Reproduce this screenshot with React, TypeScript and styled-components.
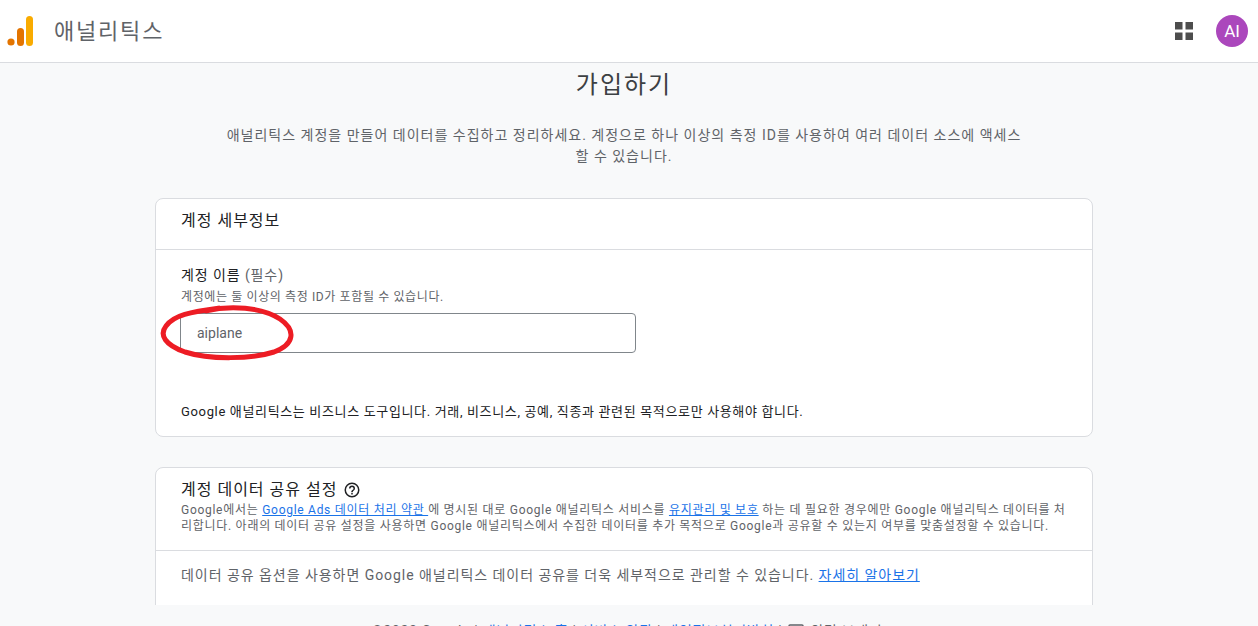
import styled, { createGlobalStyle } from "styled-components";

const GlobalStyle = createGlobalStyle`
  html, body {
    margin: 0;
    height: 100%;
    overflow: hidden;
    background: #f8f9fa;
  }
  body {
    font-family: Roboto, "Noto Sans CJK KR", sans-serif;
    color: #3c4043;
  }
`;

const Page = styled.div`
  display: flex;
  flex-direction: column;
  height: 626px;
  overflow: hidden;
`;

const Header = styled.header`
  flex: none;
  display: flex;
  align-items: center;
  height: 62px;
  background: #fff;
  border-bottom: 1px solid #dadce0;
  padding: 0 10px 0 7px;
`;

const Brand = styled.div`
  font-size: 22px;
  color: #5f6368;
  margin-left: 20px;
  letter-spacing: 1.8px;
  flex: 1;
  padding-bottom: 4px;
`;

const AppsIcon = styled.svg`
  width: 18px;
  height: 18px;
  margin-right: 23px;
  fill: #4d4d4d;
`;

const Avatar = styled.div`
  width: 32px;
  height: 32px;
  border-radius: 50%;
  background: #ab47bc;
  color: #fff;
  font-size: 17px;
  display: flex;
  align-items: center;
  justify-content: center;
`;

const Scroller = styled.main`
  flex: none;
  height: 542px;
  box-sizing: border-box;
  padding-right: 10px;
  overflow: hidden;
  position: relative;
`;

const Title = styled.h1`
  margin: 6px 0 0;
  font-size: 24px;
  line-height: 32px;
  font-weight: 400;
  letter-spacing: 2px;
  color: #3c4043;
  text-align: center;
`;

const Intro = styled.p`
  width: 810px;
  margin: 24px auto 31px;
  font-size: 14px;
  line-height: 21px;
  letter-spacing: 1px;
  color: #5f6368;
  text-align: center;
`;

const Card = styled.section`
  width: 938px;
  box-sizing: border-box;
  margin: 0 auto 30px;
  background: #fff;
  border: 1px solid #dadce0;
  border-radius: 8px;
`;

const CardHead = styled.div<{ $height: number }>`
  height: ${(p) => p.$height}px;
  box-sizing: border-box;
  padding: 12px 24px 0 25px;
  border-bottom: 1px solid #dadce0;
`;

const CardTitle = styled.h2`
  margin: 0;
  display: flex;
  align-items: center;
  gap: 6px;
  font-size: 16px;
  line-height: 20px;
  font-weight: 400;
  letter-spacing: 1px;
  color: #202124;
`;

const CardBody = styled.div`
  padding: 15px 24px 0 25px;
`;

const FieldLabel = styled.div`
  font-size: 14px;
  line-height: 20px;
  letter-spacing: 0.9px;
  color: #202124;
`;

const Required = styled.span`
  color: #5f6368;
`;

const Hint = styled.div`
  margin-top: 4px;
  font-size: 12px;
  line-height: 16px;
  letter-spacing: 0.62px;
  color: #5f6368;
`;

const NameInput = styled.div`
  box-sizing: border-box;
  width: 456px;
  height: 40px;
  margin: 8px 0 0 -1px;
  padding-left: 16px;
  display: flex;
  align-items: center;
  border: 1px solid #80868b;
  border-radius: 4px;
  font-size: 14px;
  color: #5f6368;
`;

const Notice = styled.p`
  margin: 50px 0 0;
  padding-bottom: 15px;
  font-size: 13px;
  line-height: 18px;
  letter-spacing: 0.65px;
  color: #202124;
`;

const ShareText = styled.p`
  margin: 2px 0 0;
  font-size: 12px;
  line-height: 16px;
  letter-spacing: 0.72px;
  color: #5f6368;
`;

const Link = styled.a`
  color: #1a73e8;
  text-decoration: underline;
`;

const ShareOptions = styled.p`
  margin: 0;
  padding: 14px 24px 40px 25px;
  font-size: 14px;
  line-height: 20px;
  letter-spacing: 0.95px;
  color: #5f6368;
`;

const Marker = styled.svg`
  position: absolute;
  left: 160px;
  top: 241px;
  width: 136px;
  height: 58px;
  fill: none;
  stroke: #ed1c24;
  stroke-width: 5;
`;

const Footer = styled.footer`
  flex: none;
  display: flex;
  justify-content: center;
  align-items: center;
  gap: 6px;
  padding: 18px 4px 0 0;
  font-size: 14px;
  line-height: 16px;
  letter-spacing: 0.7px;
  color: #5f6368;
  white-space: pre;
`;

const FeedbackIcon = styled.svg`
  width: 16px;
  height: 16px;
  fill: none;
  stroke: #5f6368;
  stroke-width: 1.5;
`;

function LogoMark() {
  return (
    <svg width="27" height="30" viewBox="0 0 27 30">
      <rect x="19" y="0" width="7" height="30" rx="3.5" fill="#f9ab00" />
      <rect x="10" y="12" width="7" height="18" rx="3.5" fill="#e37400" />
      <circle cx="4" cy="26" r="3.6" fill="#e37400" />
    </svg>
  );
}

export default function App() {
  return (
    <Page>
      <GlobalStyle />
      <Header>
        <LogoMark />
        <Brand>애널리틱스</Brand>
        <AppsIcon viewBox="0 0 18 18">
          <rect x="0" y="0" width="7.5" height="7.5" />
          <rect x="10.5" y="0" width="7.5" height="7.5" />
          <rect x="0" y="10.5" width="7.5" height="7.5" />
          <rect x="10.5" y="10.5" width="7.5" height="7.5" />
        </AppsIcon>
        <Avatar>AI</Avatar>
      </Header>
      <Scroller>
        <Title>가입하기</Title>
        <Intro>
          애널리틱스 계정을 만들어 데이터를 수집하고 정리하세요. 계정으로 하나 이상의 측정 ID를 사용하여 여러 데이터 소스에 액세스
          할 수 있습니다.
        </Intro>
        <Card>
          <CardHead $height={51}>
            <CardTitle>계정 세부정보</CardTitle>
          </CardHead>
          <CardBody>
            <FieldLabel>
              계정 이름 <Required>(필수)</Required>
            </FieldLabel>
            <Hint>계정에는 둘 이상의 측정 ID가 포함될 수 있습니다.</Hint>
            <NameInput>aiplane</NameInput>
            <Notice>Google 애널리틱스는 비즈니스 도구입니다. 거래, 비즈니스, 공예, 직종과 관련된 목적으로만 사용해야 합니다.</Notice>
          </CardBody>
        </Card>
        <Card>
          <CardHead $height={83}>
            <CardTitle>
              계정 데이터 공유 설정
              <svg width="18" height="18" viewBox="0 0 24 24" fill="#202124">
                <path d="M12 2a10 10 0 1 0 0 20 10 10 0 0 0 0-20zm0 18a8 8 0 1 1 0-16 8 8 0 0 1 0 16zm-1-4h2v2h-2zm1-10a4 4 0 0 0-4 4h2a2 2 0 1 1 4 0c0 2-3 1.75-3 5h2c0-2.25 3-2.5 3-5a4 4 0 0 0-4-4z" />
              </svg>
            </CardTitle>
            <ShareText>
              Google에서는 <Link>Google Ads 데이터 처리 약관 </Link>에 명시된 대로 Google 애널리틱스 서비스를 <Link>유지관리 및 보호</Link> 하는 데 필요한 경우에만 Google 애널리틱스 데이터를 처리합니다. 아래의 데이터 공유 설정을 사용하면 Google 애널리틱스에서 수집한 데이터를 추가 목적으로 Google과 공유할 수 있는지 여부를 맞춤설정할 수 있습니다.
            </ShareText>
          </CardHead>
          <ShareOptions>
            데이터 공유 옵션을 사용하면 Google 애널리틱스 데이터 공유를 더욱 세부적으로 관리할 수 있습니다. <Link>자세히 알아보기</Link>
          </ShareOptions>
        </Card>
        <Marker viewBox="0 0 136 58">
          <path d="M45 7 C70 1 102 3 120 15 C136 26 135 40 114 48 C92 55 50 56 25 48 C5 41 -1 31 6 22 C14 11 30 8 60 4" />
        </Marker>
      </Scroller>
      <Footer>
        <span>©2023 Google | <Link>애널리틱스 홈</Link> | <Link>서비스 약관</Link> | <Link>개인정보처리방침</Link> |</span>
        <FeedbackIcon viewBox="0 0 16 16">
          <rect x="1" y="2" width="14" height="11" rx="1" />
        </FeedbackIcon>
        <span>의견 보내기</span>
      </Footer>
    </Page>
  );
}
